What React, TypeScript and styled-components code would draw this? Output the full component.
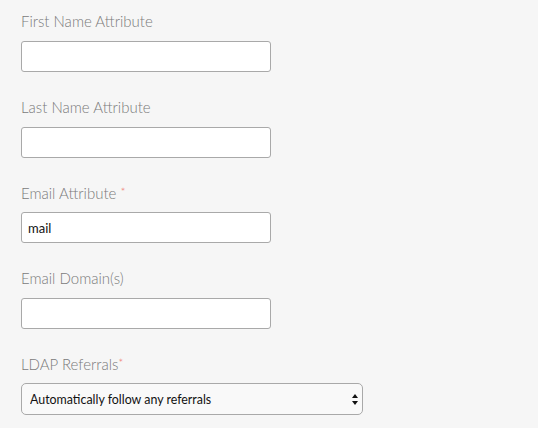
import React from "react";
import styled, { createGlobalStyle } from "styled-components";

const Global = createGlobalStyle`
  html, body {
    margin: 0;
    padding: 0;
    background: #f6f6f6;
  }
  body {
    font-family: "Lato", "Open Sans", sans-serif;
  }
`;

const Form = styled.form`
  display: flex;
  flex-direction: column;
  padding: 11px 0 0 21px;
`;

const Field = styled.div`
  display: flex;
  flex-direction: column;
  gap: 10px;
  margin-bottom: 24.5px;
`;

const Label = styled.label`
  display: block;
  height: 20px;
  line-height: 20px;
  font-family: "Lato", sans-serif;
  font-weight: 300;
  font-size: 15px;
  color: #7a7a7a;
`;

const Required = styled.span<{ $spaced?: boolean }>`
  color: #f07a6e;
  font-size: 12px;
  vertical-align: 3px;
  margin-left: ${(p) => (p.$spaced ? "4px" : "0")};
`;

const TextInput = styled.input`
  box-sizing: border-box;
  width: 250px;
  height: 31px;
  margin: 0;
  padding: 0 6px;
  border: 1px solid #a9a9a9;
  border-radius: 3px;
  background: #ffffff;
  font-family: "Lato", sans-serif;
  font-weight: 400;
  font-size: 13px;
  color: #111;
  outline: none;
`;

const SelectWrap = styled.div`
  position: relative;
  width: 342px;
  height: 32px;
`;

const Select = styled.select`
  box-sizing: border-box;
  width: 100%;
  height: 100%;
  margin: 0;
  padding: 0 20px 0 8px;
  appearance: none;
  -webkit-appearance: none;
  border: 1px solid #a9a9a9;
  border-radius: 5px;
  background: #f9f9f9;
  font-family: "Lato", sans-serif;
  font-weight: 400;
  font-size: 12.4px;
  color: #111;
  outline: none;
`;

const Arrows = styled.svg`
  position: absolute;
  right: 5px;
  top: 11px;
  pointer-events: none;
`;

export default function App() {
  return (
    <>
      <Global />
      <Form>
        <Field>
          <Label>First Name Attribute</Label>
          <TextInput type="text" defaultValue="" />
        </Field>
        <Field>
          <Label>Last Name Attribute</Label>
          <TextInput type="text" defaultValue="" />
        </Field>
        <Field>
          <Label>
            Email Attribute<Required $spaced>*</Required>
          </Label>
          <TextInput type="text" defaultValue="mail" />
        </Field>
        <Field>
          <Label>Email Domain(s)</Label>
          <TextInput type="text" defaultValue="" />
        </Field>
        <Field>
          <Label>
            LDAP Referrals<Required>*</Required>
          </Label>
          <SelectWrap>
            <Select defaultValue="follow">
              <option value="follow">Automatically follow any referrals</option>
              <option value="ignore">Ignore referrals</option>
            </Select>
            <Arrows width="6" height="11" viewBox="0 0 6 11">
              <path d="M3 0 L6 4 L0 4 Z" fill="#111" />
              <path d="M0 7 L6 7 L3 11 Z" fill="#111" />
            </Arrows>
          </SelectWrap>
        </Field>
      </Form>
    </>
  );
}
